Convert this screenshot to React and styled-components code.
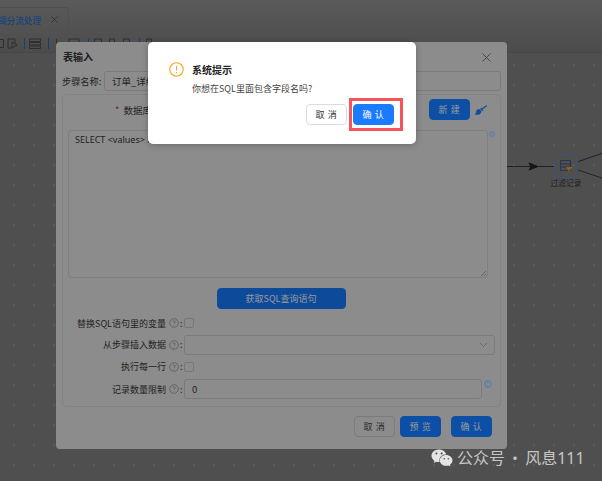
import React from "react";
import styled, { createGlobalStyle } from "styled-components";
import { FaBroom, FaWeixin } from "react-icons/fa";

const Global = createGlobalStyle`
  html, body { margin: 0; padding: 0; background: #4f4f4f; }
  * { box-sizing: border-box; }
  body { font-family: "Noto Sans CJK SC", "Noto Sans", sans-serif; }
`;

const Stage = styled.div`
  position: relative; width: 602px; height: 481px; overflow: hidden;
  display: flex; flex-direction: column; background: #4f4f4f;
`;
const TopBand = styled.header`
  height: 53px; flex: none; background: linear-gradient(#5a5a5a, #4c4c4c);
  border-bottom: 1px solid #474747; display: flex; flex-direction: column;
`;
const TabStrip = styled.div`
  height: 35px; padding-top: 7px; display: flex; flex: none;
`;
const Tab = styled.div`
  width: 69px; height: 28px; border: 1px solid #505050; border-left: 0; border-bottom: 0;
  border-radius: 0 4px 0 0; display: flex; align-items: center; gap: 10px;
  overflow: hidden; white-space: nowrap; color: #0c3f85; font-size: 8.6px; line-height: 14px;
  padding-bottom: 4px;
`;
const TabText = styled.span`margin-left: -2px;`;
const Toolbar = styled.div`
  display: flex; align-items: center; height: 17px; color: #2b2b2b;
`;
const ToolSlot = styled.span`
  display: block; flex: none; margin-left: ${p => p.$ml || 0}px; line-height: 0;
`;
const Sep = styled.i`
  width: 1px; height: 11px; background: #16406f; display: block; flex: none; margin-left: ${p => p.$ml || 0}px;
`;
const Canvas = styled.main`
  flex: 1; position: relative;
  background-color: #4f4f4f;
  background-image: radial-gradient(circle, #5b5b5b 0.7px, transparent 1px);
  background-size: 20px 20px; background-position: 4px 2px;
`;
const Node = styled.div`
  position: absolute; left: 554px; top: 101px; width: 24px; height: 24px; border-radius: 6px;
  border: 1px solid #3d5578; display: flex; align-items: center; justify-content: center;
`;
const NodeLabel = styled.span`
  position: absolute; left: 548px; top: 123px; width: 36px; text-align: center;
  font-size: 7.8px; line-height: 14px; color: #1f1f1f; white-space: nowrap;
`;
const Edges = styled.svg`position: absolute; left: 0; top: 0;`;

const Dialog = styled.section`
  position: absolute; left: 56px; top: 42px; width: 451px; height: 407px;
  background: #8c8c8c; border-radius: 4px; padding: 0 6px; display: flex; flex-direction: column;
`;
const DialogHead = styled.div`
  height: 29px; display: flex; align-items: center; justify-content: space-between;
  padding: 1px 10px 0 1px; flex: none;
`;
const DialogTitle = styled.h2`
  margin: 0; font-size: 10px; font-weight: 700; color: #1d1d1d; line-height: 14px;
`;
const NameRow = styled.div`display: flex; align-items: center; height: 20px; flex: none;`;
const NameLabel = styled.label`width: 42px; font-size: 9.2px; color: #222; white-space: nowrap;`;
const TextBox = styled.div`
  flex: ${p => p.$grow ? 1 : "none"}; height: 20px; border: 1px solid #7b7b7b; border-radius: 3px;
  font-size: 9.5px; color: #1f1f1f; padding-left: 7px; display: flex; align-items: center;
  justify-content: space-between; padding-right: 6px; background: #8c8c8c;
`;
const Group = styled.div`
  margin-top: 3px; height: 313px; flex: none; border: 1px solid #838383; border-radius: 4px;
  padding: 4px 5px 0 5px; display: flex; flex-direction: column;
`;
const DbRow = styled.div`
  height: 21px; display: flex; align-items: center; flex: none; padding-left: 47px;
  font-size: 9.5px; color: #222;
`;
const Star = styled.span`color: #7d2020; margin-right: 4px;`;
const DbRight = styled.div`margin-left: auto; display: flex; align-items: center; gap: 5px; padding-right: 8px;`;
const Button = styled.button`
  font-family: inherit; width: ${p => p.$w || 41}px; height: ${p => p.$h || 21}px; padding: 0;
  border-radius: 4px; font-size: ${p => p.$fs || 9}px; letter-spacing: ${p => p.$ls ?? 0.6}px;
  border: 1px solid ${p => p.$bd}; background: ${p => p.$bg}; color: ${p => p.$fg};
  display: block; flex: none; line-height: 1;
`;
const AreaRow = styled.div`display: flex; margin-top: 10px; flex: none; gap: 1px;`;
const Area = styled.div`
  position: relative; width: 420px; height: 148px; flex: none; border: 1px solid #7f7f7f; border-radius: 3px;
  font-family: "Noto Sans", "Liberation Sans", sans-serif;
  font-size: 9px; line-height: 12px; padding: 3px 6px; color: #222;
`;
const Grip = styled.svg`position: absolute; right: 0; bottom: 0;`;
const FetchWrap = styled.div`display: flex; justify-content: center; margin: 10px 0 4px; padding-right: 1px;`;
const FormRow = styled.div`
  display: flex; align-items: center; height: ${p => p.$h}px; flex: none; margin-top: ${p => p.$mt || 0}px;
`;
const FormLabel = styled.div`
  width: 116px; display: flex; justify-content: flex-end; align-items: center; gap: 3px;
  font-size: 9px; color: #222; white-space: nowrap; flex: none;
`;
const Colon = styled.span`margin-left: -2px; width: 4px;`;
const Check = styled.span`
  width: 10px; height: 10px; border: 1px solid #767676; border-radius: 2px; display: block;
`;
const SideIcon = styled.span`display: block; flex: none; line-height: 0; margin: -11px 0 0 2px;`;
const Footer = styled.div`
  flex: 1; display: flex; justify-content: flex-end; align-items: flex-start; padding: 9px 9px 0 0;
`;
const FooterGap = styled.span`width: ${p => p.$w}px; flex: none;`;

const AlertBox = styled.section`
  position: absolute; left: 148px; top: 42px; width: 268px; height: 102px; background: #fff;
  border-radius: 5px; padding: 20px 22px 0 21px; display: flex; flex-direction: column;
  box-shadow: 0 1px 6px rgba(0,0,0,.25);
`;
const AlertHead = styled.div`display: flex; align-items: center; gap: 8px; height: 15px;`;
const AlertTitle = styled.h3`margin: 0; font-size: 10px; font-weight: 700; color: #222; line-height: 15px;`;
const AlertMsg = styled.p`margin: 5px 0 0 23px; font-size: 9px; line-height: 14px; color: #444; white-space: nowrap;`;
const AlertFoot = styled.div`display: flex; justify-content: flex-end; gap: 6px; margin-top: 8px;`;
const Highlight = styled.div`
  position: absolute; left: 349px; top: 98px; width: 54px; height: 33px;
  border: 3px solid #f4545a; pointer-events: none;
`;
const Watermark = styled.div`
  position: absolute; left: 431px; top: 446px; display: flex; align-items: center; gap: 4px;
  color: #c6c6c6; font-size: 16px; line-height: 22px; white-space: nowrap; word-spacing: -1.500px;
`;
const Num = styled.span`font-family: "Noto Sans", sans-serif;`;

const Help = () => (
  <svg width="10" height="10" viewBox="0 0 10 10" fill="none" stroke="#555" strokeWidth=".7">
    <circle cx="5" cy="5" r="4.3" />
    <path d="M3.7 3.9C3.800 2.500 6.300 2.500 6.300 3.900 6.300 4.900 5 4.900 5 6" />
    <path d="M5 7v.7" />
  </svg>
);
const Info = () => (
  <svg width="8" height="8" viewBox="0 0 8 8" fill="none" stroke="#3f77b8" strokeWidth=".9">
    <circle cx="4" cy="4" r="3.300" /><path d="M4 2.200v2.200M4 5.200v.7" />
  </svg>
);
const ToolIcon = ({ d, w = 12, ml }) => (
  <ToolSlot $ml={ml}>
    <svg width={w} height="11" viewBox={`0 0 ${w} 11`} fill="none" stroke="#2e2e2e" strokeWidth="1"><path d={d} /></svg>
  </ToolSlot>
);

export default function App() {
  return (
    <Stage>
      <Global />
      <TopBand>
        <TabStrip>
          <Tab>
            <TabText>阈分流处理</TabText>
            <svg width="7" height="7" viewBox="0 0 7 7" stroke="#333" strokeWidth="1"><path d="M.5.5l6 6M6.500.5l-6 6" /></svg>
          </Tab>
        </TabStrip>
        <Toolbar>
          <ToolIcon w={4} d="M0 1.500h3.500v8H0" />
          <ToolIcon w={10} ml={3} d="M1 1h7v4M1 1v9h4M5 4l5 3-5 3z" />
          <Sep $ml={7} />
          <ToolIcon ml={4} d="M.5 1h11v2.500H.5zM.5 4.500h11V7H.5zM.5 8h11v2.500H.5z" />
          <Sep $ml={7} />
          <ToolIcon w={3} ml={6} d="M1.500 1v9" />
          <ToolIcon ml={10} d="M1 1h10v9H1z" />
          <Sep $ml={8} />
          <ToolIcon w={8} ml={5} d="M.5 1h7v9h-7z" />
          <ToolIcon w={6} ml={7} d="M.5 1h5v9h-5z" />
          <ToolIcon w={7} ml={8} d="M.5 1h6v9h-6z" />
          <Sep $ml={9} />
          <ToolIcon w={6} ml={6} d="M.5 1h5v9h-5z" />
        </Toolbar>
      </TopBand>
      <Canvas>
        <Edges width="602" height="428" viewBox="0 0 602 428" fill="none" stroke="#161616">
          <path d="M507 113.500H554M578 108.700L602 100.300M578 117L602 125" strokeWidth=".8" />
          <path d="M529 110l9 3.500-9 3.500 2-3.500z" fill="#161616" />
        </Edges>
        <Node>
          <svg width="14" height="14" viewBox="0 0 14 14" fill="none">
            <path d="M1.500 1.500h10v10h-10zM1.500 5h10M1.500 8h10" stroke="#26374e" />
            <path d="M7 8h6.500l-3 3.500v2l-1-.7V11.500z" fill="#8a6520" />
          </svg>
        </Node>
        <NodeLabel>过滤记录</NodeLabel>
      </Canvas>

      <Dialog>
        <DialogHead>
          <DialogTitle>表输入</DialogTitle>
          <svg width="9" height="9" viewBox="0 0 9 9" stroke="#474747" strokeWidth="1"><path d="M.5.5l8 8M8.500.5l-8 8" /></svg>
        </DialogHead>
        <NameRow>
          <NameLabel>步骤名称:</NameLabel>
          <TextBox $grow>订单_详细</TextBox>
        </NameRow>
        <Group>
          <DbRow>
            <Star>*</Star>数据库
            <DbRight>
              <Button $bg="#0e4fa6" $bd="#0e4fa6" $fg="#9c9c9c">新 建</Button>
              <FaBroom size={12} color="#0f4d9e" />
            </DbRight>
          </DbRow>
          <AreaRow>
            <Area>
              SELECT &lt;values&gt; FROM
              <Grip width="7" height="7" viewBox="0 0 7 7" stroke="#555" strokeWidth=".7"><path d="M1 6l5-5M4 6l2-2" /></Grip>
            </Area>
            <Info />
          </AreaRow>
          <FetchWrap>
            <Button $w={129} $bg="#0e4a9a" $bd="#0e4a9a" $fg="#9a9a9a" $ls={0} $fs={9}>获取SQL查询语句</Button>
          </FetchWrap>
          <FormRow $h={20}>
            <FormLabel>替换SQL语句里的变量 <Help /><Colon>:</Colon></FormLabel>
            <Check />
          </FormRow>
          <FormRow $h={21} $mt={1}>
            <FormLabel>从步骤插入数据 <Help /><Colon>:</Colon></FormLabel>
            <TextBox $grow>
              <span />
              <svg width="9" height="6" viewBox="0 0 9 6" fill="none" stroke="#6b6b6b"><path d="M1 1l3.500 3.500L8 1" /></svg>
            </TextBox>
          </FormRow>
          <FormRow $h={21} $mt={1}>
            <FormLabel>执行每一行 <Help /><Colon>:</Colon></FormLabel>
            <Check />
          </FormRow>
          <FormRow $h={20} $mt={2}>
            <FormLabel>记录数量限制 <Help /><Colon>:</Colon></FormLabel>
            <TextBox $grow>0</TextBox>
            <SideIcon><Info /></SideIcon>
            <FooterGap $w={3} />
          </FormRow>
        </Group>
        <Footer>
          <Button $bg="#8c8c8c" $bd="#7b7b7b" $fg="#2a2a2a">取 消</Button>
          <FooterGap $w={5} />
          <Button $bg="#0e4fa6" $bd="#0e4fa6" $fg="#9c9c9c">预 览</Button>
          <FooterGap $w={10} />
          <Button $bg="#0e4fa6" $bd="#0e4fa6" $fg="#9c9c9c">确 认</Button>
        </Footer>
      </Dialog>

      <AlertBox>
        <AlertHead>
          <svg width="15" height="15" viewBox="0 0 15 15" fill="none" stroke="#f5a623" strokeWidth="1.100">
            <circle cx="7.500" cy="7.500" r="6.700" /><path d="M7.500 3.800v4.600M7.500 10v1.200" />
          </svg>
          <AlertTitle>系统提示</AlertTitle>
        </AlertHead>
        <AlertMsg>你想在SQL里面包含字段名吗?</AlertMsg>
        <AlertFoot>
          <Button $bg="#fff" $bd="#dcdcdc" $fg="#333">取 消</Button>
          <Button $bg="#1a7bff" $bd="#1a7bff" $fg="#fff">确 认</Button>
        </AlertFoot>
      </AlertBox>
      <Highlight />
      <Watermark>
        <FaWeixin size={22} color="#e4e4e4" />
        <span>公众号 · 风息<Num>111</Num></span>
      </Watermark>
    </Stage>
  );
}
